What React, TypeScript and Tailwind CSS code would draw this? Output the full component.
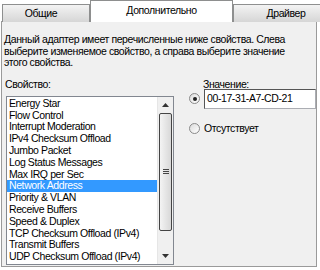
const props = [
  "Energy Star",
  "Flow Control",
  "Interrupt Moderation",
  "IPv4 Checksum Offload",
  "Jumbo Packet",
  "Log Status Messages",
  "Max IRQ per Sec",
  "Network Address",
  "Priority & VLAN",
  "Receive Buffers",
  "Speed & Duplex",
  "TCP Checksum Offload (IPv4)",
  "Transmit Buffers",
  "UDP Checksum Offload (IPv4)",
]

function Radio({ checked }: { checked?: boolean }) {
  return (
    <div className="w-[11px] h-[11px] shrink-0 rounded-full border border-[#8a8a8a] bg-linear-to-br from-[#dcdcdc] to-white flex items-center justify-center">
      {checked && <div className="w-[4px] h-[4px] rounded-full bg-[#222]" />}
    </div>
  )
}

export default function App() {
  return (
    <div className="w-[320px] h-[270px] bg-white overflow-hidden text-[10.5px] tracking-[-0.4px] text-black font-['Liberation_Sans',Arial,sans-serif]">
      {/* Tabs */}
      <div className="flex items-end h-[22px] relative z-10">
        <div className="ml-[2px] w-[88px] shrink-0 h-[18px] border border-b-0 border-[#8e8f8f] bg-linear-to-b from-[#f3f3f3] to-[#d6d6d6] flex items-center justify-center pr-[10px]">
          Общие
        </div>
        <div className="w-[143px] shrink-0 h-[22px] bg-white border border-b-0 border-[#8e8f8f] flex items-center justify-center pb-[2px]">
          Дополнительно
        </div>
        <div className="w-[106px] shrink-0 h-[18px] border border-b-0 border-[#8e8f8f] bg-linear-to-b from-[#f3f3f3] to-[#d6d6d6] flex items-center justify-center">
          Драйвер
        </div>
      </div>

      {/* Panel */}
      <div className="ml-[1px] w-[316px] h-[246px] -mt-px border border-[#9a9a9a] bg-[#f0f0f0] px-[2px] pt-[12px]">
        <p className="leading-[11.6px] pr-[26px]">
          Данный адаптер имеет перечисленные ниже свойства. Слева выберите изменяемое свойство, а справа выберите значение этого свойства.
        </p>

        <div className="flex mt-[9px]">
          {/* Left column */}
          <div className="w-[172px] shrink-0">
            <div className="leading-[12px] pl-[1px]">Свойство:</div>
            <div className="mt-[6px] ml-[2px] w-[168px] h-[169px] bg-white border border-[#828790] flex">
              <div className="flex-1 pt-[1px]">
                {props.map((p) => (
                  <div
                    key={p}
                    className={`h-[11.8px] leading-[11.8px] pl-[2px] whitespace-nowrap ${p === "Network Address" ? "bg-[#3399ff] text-white" : ""}`}
                  >
                    {p}
                  </div>
                ))}
              </div>
              {/* Scrollbar */}
              <div className="w-[16px] bg-[#f0f0f0] border-l border-[#e6e6e6] flex flex-col">
                <div className="h-[16px] flex items-center justify-center">
                  <svg width="7" height="4" viewBox="0 0 7 4"><path d="M3.5 0L7 4H0z" fill="#333" /></svg>
                </div>
                <div className="mx-[1px] h-[118px] rounded-[2px] border border-[#444] bg-linear-to-r from-[#f4f4f4] to-[#d8d8d8] flex items-center justify-center">
                  <div className="flex flex-col gap-[1px]">
                    <div className="w-[6px] h-px bg-[#444]" />
                    <div className="w-[6px] h-px bg-[#444]" />
                    <div className="w-[6px] h-px bg-[#444]" />
                  </div>
                </div>
                <div className="flex-1" />
                <div className="h-[16px] flex items-center justify-center">
                  <svg width="7" height="4" viewBox="0 0 7 4"><path d="M0 0H7L3.5 4z" fill="#333" /></svg>
                </div>
              </div>
            </div>
          </div>

          {/* Right column */}
          <div className="flex-1 pl-[13px]">
            <div className="leading-[12px] pl-[14px]">Значение:</div>
            <div className="flex items-center mt-[-1px] gap-[4px]">
              <Radio checked />
              <div className="w-[112px] h-[20px] bg-white border border-[#abadb3] border-t-[#555] border-l-[#555] flex items-center pl-[2px]">
                00-17-31-A7-CD-21
              </div>
            </div>
            <div className="flex items-center mt-[12px] gap-[4px]">
              <Radio />
              <span>Отсутствует</span>
            </div>
          </div>
        </div>
      </div>
    </div>
  )
}
